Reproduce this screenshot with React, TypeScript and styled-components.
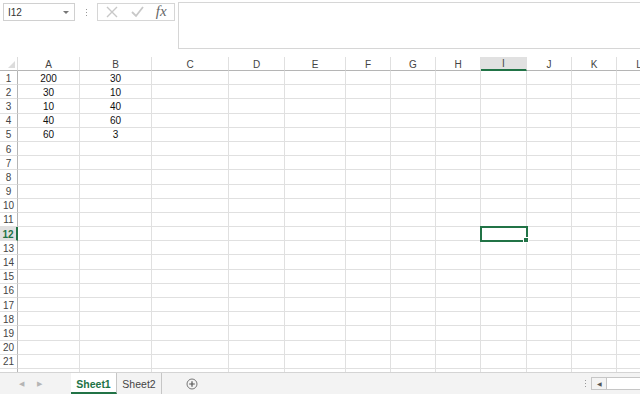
import React from "react";
import styled, { createGlobalStyle } from "styled-components";

const GlobalStyle = createGlobalStyle`
    html, body {
        margin: 0;
        padding: 0;
        background: #fff;
        overflow: hidden;
    }
    body {
        font-family: "Liberation Sans", Arial, sans-serif;
        color: #222;
    }
`;

const COLS = [
    { name: "A", w: 62 },
    { name: "B", w: 72 },
    { name: "C", w: 77 },
    { name: "D", w: 56 },
    { name: "E", w: 61 },
    { name: "F", w: 45 },
    { name: "G", w: 45 },
    { name: "H", w: 45 },
    { name: "I", w: 46 },
    { name: "J", w: 45 },
    { name: "K", w: 45 },
    { name: "L", w: 45 },
];

const DATA: Record<number, [string, string]> = {
    1: ["200", "30"],
    2: ["30", "10"],
    3: ["10", "40"],
    4: ["40", "60"],
    5: ["60", "3"],
};

const SEL_ROW = 12;
const SEL_COL = "I";

const Page = styled.div`
    width: 640px;
    height: 394px;
    display: flex;
    flex-direction: column;
    overflow: hidden;
`;

const TopBar = styled.div`
    height: 57px;
    flex-shrink: 0;
    display: flex;
    align-items: flex-start;
    padding: 2px 0 0 3px;
    box-sizing: border-box;
`;

const NameBox = styled.div`
    width: 72px;
    height: 18px;
    margin-top: 1px;
    border: 1px solid #d0d0d0;
    box-sizing: border-box;
    display: flex;
    align-items: center;
    justify-content: space-between;
    padding: 0 5px 0 4px;
    font-size: 10px;
    color: #333;
`;

const Caret = styled.span`
    width: 0;
    height: 0;
    border-left: 3px solid transparent;
    border-right: 3px solid transparent;
    border-top: 3px solid #777;
`;

const Grip = styled.div`
    width: 22px;
    display: flex;
    flex-direction: column;
    align-items: center;
    gap: 2px;
    padding-top: 7px;
    span {
        width: 1px;
        height: 1px;
        background: #999;
    }
`;

const FxButtons = styled.div`
    width: 78px;
    height: 18px;
    margin-top: 1px;
    border: 1px solid #d6d6d6;
    box-sizing: border-box;
    display: flex;
    align-items: center;
    justify-content: space-around;
    padding: 0 2px;
`;

const FxLabel = styled.span`
    font-family: "Liberation Serif", "Times New Roman", serif;
    font-style: italic;
    font-size: 15px;
    color: #666;
    line-height: 1;
    margin-top: -2px;
`;

const FormulaInput = styled.div`
    flex: 1;
    height: 47px;
    margin-left: 3px;
    border: 1px solid #d6d6d6;
    border-right: none;
    box-sizing: border-box;
`;

const Sheet = styled.div`
    flex: 1;
    overflow: hidden;
    display: flex;
    flex-direction: column;
`;

const Row = styled.div<{ $h: number }>`
    display: flex;
    height: ${(p) => p.$h}px;
    flex-shrink: 0;
`;

const Corner = styled.div`
    width: 18px;
    flex-shrink: 0;
    border-right: 1px solid #dcdcdc;
    border-bottom: 1px solid #b5b5b5;
    box-sizing: border-box;
    position: relative;
    &::after {
        content: "";
        position: absolute;
        right: 2px;
        bottom: 2px;
        width: 0;
        height: 0;
        border-left: 7px solid transparent;
        border-bottom: 7px solid #dcdcdc;
    }
`;

const ColHead = styled.div<{ $w: number; $sel?: boolean }>`
    width: ${(p) => p.$w}px;
    flex-shrink: 0;
    box-sizing: border-box;
    border-right: 1px solid #e0e0e0;
    border-bottom: ${(p) => (p.$sel ? "2px solid #217346" : "1px solid #b5b5b5")};
    background: ${(p) => (p.$sel ? "#e1e1e1" : "#fff")};
    font-size: 10px;
    color: #444;
    display: flex;
    align-items: center;
    justify-content: center;
    padding-top: 1px;
`;

const RowHead = styled.div<{ $sel?: boolean }>`
    width: 18px;
    flex-shrink: 0;
    box-sizing: border-box;
    border-right: ${(p) => (p.$sel ? "2px solid #217346" : "1px solid #b5b5b5")};
    border-bottom: 1px solid #e0e0e0;
    background: ${(p) => (p.$sel ? "#e1e1e1" : "#fff")};
    font-size: 10px;
    font-weight: ${(p) => (p.$sel ? 700 : 400)};
    color: ${(p) => (p.$sel ? "#217346" : "#444")};
    display: flex;
    align-items: center;
    justify-content: center;
    padding-top: 1px;
`;

const Cell = styled.div<{ $w: number; $sel?: boolean }>`
    width: ${(p) => p.$w}px;
    flex-shrink: 0;
    box-sizing: border-box;
    border-right: 1px solid #e0e0e0;
    border-bottom: 1px solid #e0e0e0;
    font-size: 10px;
    color: #111;
    display: flex;
    align-items: center;
    justify-content: center;
    padding-top: 1px;
    position: relative;
    ${(p) =>
        p.$sel &&
        `
        outline: 2px solid #217346;
        outline-offset: -1px;
        z-index: 2;
        &::after {
            content: "";
            position: absolute;
            right: -3px;
            bottom: -3px;
            width: 4px;
            height: 4px;
            background: #217346;
            border: 1px solid #fff;
        }
    `}
`;

const TabBar = styled.div`
    height: 22px;
    flex-shrink: 0;
    background: #f3f3f3;
    border-top: 1px solid #d4d4d4;
    box-sizing: border-box;
    display: flex;
    align-items: stretch;
    font-size: 10.5px;
`;

const NavArrows = styled.div`
    width: 71px;
    display: flex;
    align-items: center;
    gap: 13px;
    padding-left: 19px;
    box-sizing: border-box;
    color: #b5b5b5;
    font-size: 7px;
`;

const Tab = styled.div<{ $active?: boolean }>`
    display: flex;
    align-items: center;
    justify-content: center;
    width: ${(p) => (p.$active ? 46 : 45)}px;
    box-sizing: border-box;
    background: ${(p) => (p.$active ? "#fff" : "transparent")};
    color: ${(p) => (p.$active ? "#217346" : "#444")};
    font-weight: ${(p) => (p.$active ? 700 : 400)};
    border-bottom: ${(p) => (p.$active ? "2px solid #217346" : "none")};
    border-right: 1px solid #c6c6c6;
    padding-top: ${(p) => (p.$active ? 2 : 0)}px;
`;

const AddSheet = styled.div`
    margin-left: 24px;
    display: flex;
    align-items: center;
`;

const Spacer = styled.div`
    flex: 1;
`;

const Dots = styled.div`
    width: 12px;
    display: flex;
    flex-direction: column;
    align-items: center;
    justify-content: center;
    gap: 2px;
    span {
        width: 1px;
        height: 1px;
        background: #999;
    }
`;

const HScroll = styled.div`
    width: 48px;
    margin: 4px 0 4px 0;
    border: 1px solid #c6c6c6;
    border-right: none;
    background: #fff;
    display: flex;
    align-items: stretch;
`;

const ScrollArrow = styled.div`
    width: 14px;
    border-right: 1px solid #c6c6c6;
    background: #f3f3f3;
    display: flex;
    align-items: center;
    justify-content: center;
    color: #555;
    font-size: 6px;
`;

const ROW_H = 14.2;

export default function App() {
    const rows = Array.from({ length: 22 }, (_, i) => i + 1);
    return (
        <Page>
            <GlobalStyle />
            <TopBar>
                <NameBox>
                    <span>I12</span>
                    <Caret />
                </NameBox>
                <Grip>
                    <span />
                    <span />
                    <span />
                </Grip>
                <FxButtons>
                    <svg width="14" height="14" viewBox="0 0 14 14">
                        <path d="M2 2 L12 12 M12 2 L2 12" stroke="#c8c8c8" strokeWidth="1.4" fill="none" />
                    </svg>
                    <svg width="15" height="14" viewBox="0 0 15 14">
                        <path d="M2 7 L6 11 L13 2" stroke="#c8c8c8" strokeWidth="1.8" fill="none" />
                    </svg>
                    <FxLabel>fx</FxLabel>
                </FxButtons>
                <FormulaInput />
            </TopBar>
            <Sheet>
                <Row $h={14}>
                    <Corner />
                    {COLS.map((c) => (
                        <ColHead key={c.name} $w={c.w} $sel={c.name === SEL_COL}>
                            {c.name}
                        </ColHead>
                    ))}
                </Row>
                {rows.map((r) => (
                    <Row key={r} $h={ROW_H}>
                        <RowHead $sel={r === SEL_ROW}>{r}</RowHead>
                        {COLS.map((c, ci) => (
                            <Cell
                                key={c.name}
                                $w={c.w}
                                $sel={r === SEL_ROW && c.name === SEL_COL}
                            >
                                {DATA[r] && ci < 2 ? DATA[r][ci] : ""}
                            </Cell>
                        ))}
                    </Row>
                ))}
            </Sheet>
            <TabBar>
                <NavArrows>
                    <span>◀</span>
                    <span>▶</span>
                </NavArrows>
                <Tab $active>Sheet1</Tab>
                <Tab>Sheet2</Tab>
                <AddSheet>
                    <svg width="12" height="12" viewBox="0 0 12 12">
                        <circle cx="6" cy="6" r="5" stroke="#777" strokeWidth="1" fill="none" />
                        <path d="M6 3.2 V8.8 M3.2 6 H8.8" stroke="#555" strokeWidth="1.2" />
                    </svg>
                </AddSheet>
                <Spacer />
                <Dots>
                    <span />
                    <span />
                    <span />
                </Dots>
                <HScroll>
                    <ScrollArrow>◀</ScrollArrow>
                </HScroll>
            </TabBar>
        </Page>
    );
}
